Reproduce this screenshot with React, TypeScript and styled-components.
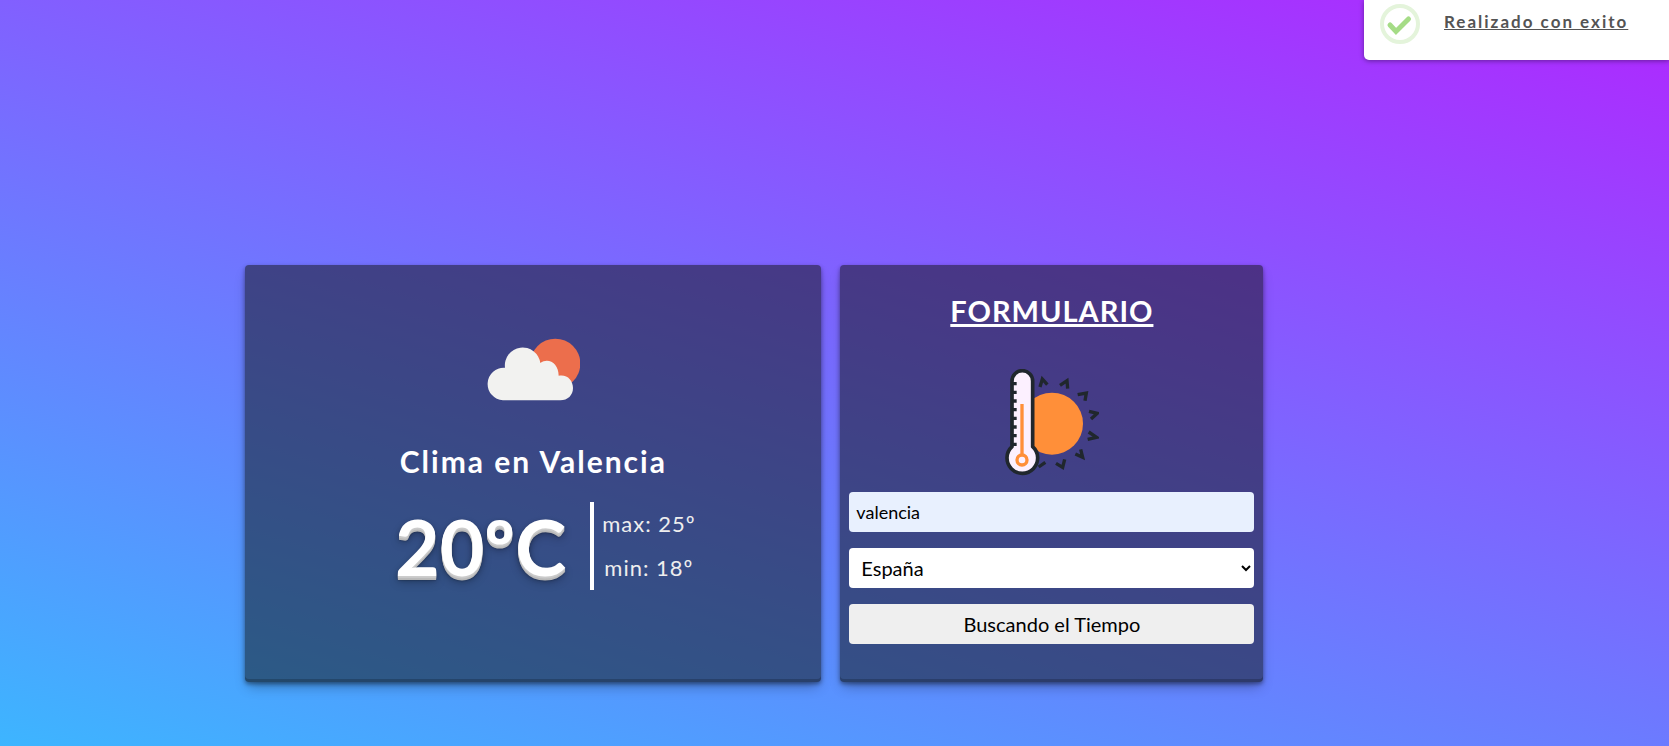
import React from "react";
import styled, { createGlobalStyle } from "styled-components";

const GlobalStyle = createGlobalStyle`
  *, *::before, *::after { box-sizing: border-box; }
  body {
    margin: 0;
    font-family: "Trebuchet MS", Lato, sans-serif;
    overflow-x: hidden;
  }
`;

const Page = styled.div`
  min-height: 100vh;
  padding: 265px 0 64px;
  background: linear-gradient(17deg, #3db5ff, #b026ff);
`;

const Toast = styled.div`
  position: absolute;
  top: 0;
  right: 0;
  display: flex;
  align-items: flex-start;
  gap: 24px;
  width: 305px;
  height: 60px;
  padding: 4px 16px;
  background: #fff;
  border-radius: 0 0 0 5px;
  box-shadow: 0 1px 5px rgba(0, 0, 0, 0.4);
`;

const ToastText = styled.p`
  margin: 6px 0 0;
  font-size: 17px;
  line-height: 24px;
  font-weight: 700;
  letter-spacing: 2px;
  color: #545454;
  text-decoration: underline;
  white-space: nowrap;
`;

const Panels = styled.main`
  display: grid;
  grid-template-columns: 576fr 423fr;
  gap: 19px;
  width: 61%;
  margin-left: 14.7%;
`;

const Card = styled.section`
  display: flex;
  flex-direction: column;
  align-items: center;
  border-radius: 4px;
  color: #fff;
  background: rgba(14, 16, 14, 0.5);
  box-shadow: rgba(0, 0, 0, 0.4) 0 2px 4px, rgba(0, 0, 0, 0.3) 0 7px 13px -3px,
    rgba(0, 0, 0, 0.2) 0 -3px 0 inset;
`;

const WeatherCard = styled(Card)`
  padding-top: 73px;
`;

const City = styled.h2`
  margin: 40px 0 21px;
  font-size: 30px;
  line-height: 40px;
  font-weight: 700;
  letter-spacing: 2px;
`;

const Readings = styled.div`
  display: flex;
  align-items: center;
  gap: 24px;
  padding-left: 24px;
`;

const Temperature = styled.p`
  margin: 0;
  font-size: 77px;
  line-height: 88px;
  font-weight: 700;
  text-shadow: 0 1px 0 #ccc, 0 2px 0 #c9c9c9, 0 3px 0 #bbb, 0 4px 0 #b9b9b9,
    0 5px 1px rgba(0, 0, 0, 0.1), 0 3px 5px rgba(0, 0, 0, 0.3),
    0 6px 10px rgba(0, 0, 0, 0.25);
`;

const Range = styled.div`
  padding-left: 8px;
  border-left: 4px solid #fff;
  color: #eee;
  font-size: 22px;
  line-height: 44px;
  letter-spacing: 1px;
  text-align: center;

  p { margin: 0; }
`;

const FormCard = styled(Card)`
  padding: 24px 9px 38px;
`;

const FormTitle = styled.h1`
  margin: 0 0 36px;
  font-size: 29px;
  line-height: 44px;
  font-weight: 700;
  letter-spacing: 1px;
  text-decoration: underline;
  text-decoration-thickness: 3px;
  text-decoration-skip-ink: none;
`;

const Form = styled.form`
  display: flex;
  flex-direction: column;
  gap: 16px;
  width: 100%;
  margin-top: 14px;

  input, select, button {
    width: 100%;
    height: 40px;
    border: 0;
    border-radius: 4px;
    font-family: inherit;
    color: #000;
  }
`;

const CityInput = styled.input`
  padding: 0 7px;
  font-size: 18px;
  background: #e8f0fe;
`;

const CountrySelect = styled.select`
  padding: 0 0 0 8px;
  font-size: 20px;
  background: #fff;
`;

const SubmitButton = styled.button`
  font-size: 20px;
  background: #efefef;
`;

const SuccessIcon = () => (
  <svg width="40" height="40" viewBox="0 0 40 40" fill="none" aria-hidden="true">
    <circle cx="20" cy="20" r="18" stroke="#e4f4db" strokeWidth="4" />
    <path d="M10 21l6 6.500L28.500 15" stroke="#a5dc86" strokeWidth="5" strokeLinecap="round" />
  </svg>
);

const CloudIcon = () => (
  <svg width="94" height="63" viewBox="50 55 282 189" aria-hidden="true">
    <circle cx="258" cy="132" r="75" fill="#ec6e4c" />
    <path
      d="M101 242a48 48 0 0 1 6-98a53 53 0 0 1 106-14c25-18 55 2 55 38c25-5 43 13 43 37c0 22-16 37-38 37z"
      fill="#f2f2f0"
    />
  </svg>
);

const ThermometerIcon = () => (
  <svg width="95" height="109" viewBox="73 55 285 327" fill="none" aria-hidden="true">
    <circle cx="217" cy="219" r="93" fill="#ff8f39" />
    <path
      d="M181 109l7-24 15 17M241 104l21-14 2 24M294 132l26-5-4 23M328 182l25 6-19 17M327 244l24 16-27 6M303 296l6 24-22-10M255 326l-6 24-20-12M197 335l-20 14"
      stroke="#20272d"
      strokeWidth="10"
    />
    <path
      d="M97 288V91a31 31 0 0 1 62 0v197a46 46 0 1 1-62 0z"
      fill="#fcf0ff"
      stroke="#20272d"
      strokeWidth="11"
      strokeLinejoin="round"
    />
    <path
      d="M98 99h13M98 125h13M98 151h13M98 177h13M98 203h13M98 229h13M98 255h13M98 281h13"
      stroke="#20272d"
      strokeWidth="10"
    />
    <path d="M127 160v150" stroke="#ff8f39" strokeWidth="10" />
    <circle cx="127" cy="328" r="15" stroke="#ff8f39" strokeWidth="10" />
  </svg>
);

export default function App() {
  return (
    <Page>
      <GlobalStyle />
      <Toast role="status">
        <SuccessIcon />
        <ToastText>Realizado con exito</ToastText>
      </Toast>
      <Panels>
        <WeatherCard>
          <CloudIcon />
          <City>Clima en Valencia</City>
          <Readings>
            <Temperature>20ºC</Temperature>
            <Range>
              <p>max: 25º</p>
              <p>min: 18º</p>
            </Range>
          </Readings>
        </WeatherCard>
        <FormCard>
          <FormTitle>FORMULARIO</FormTitle>
          <ThermometerIcon />
          <Form onSubmit={(e: React.FormEvent) => e.preventDefault()}>
            <CityInput aria-label="Ciudad" type="text" defaultValue="valencia" />
            <CountrySelect aria-label="País" defaultValue="ES">
              <option value="ES">España</option>
            </CountrySelect>
            <SubmitButton type="submit">Buscando el Tiempo</SubmitButton>
          </Form>
        </FormCard>
      </Panels>
    </Page>
  );
}
